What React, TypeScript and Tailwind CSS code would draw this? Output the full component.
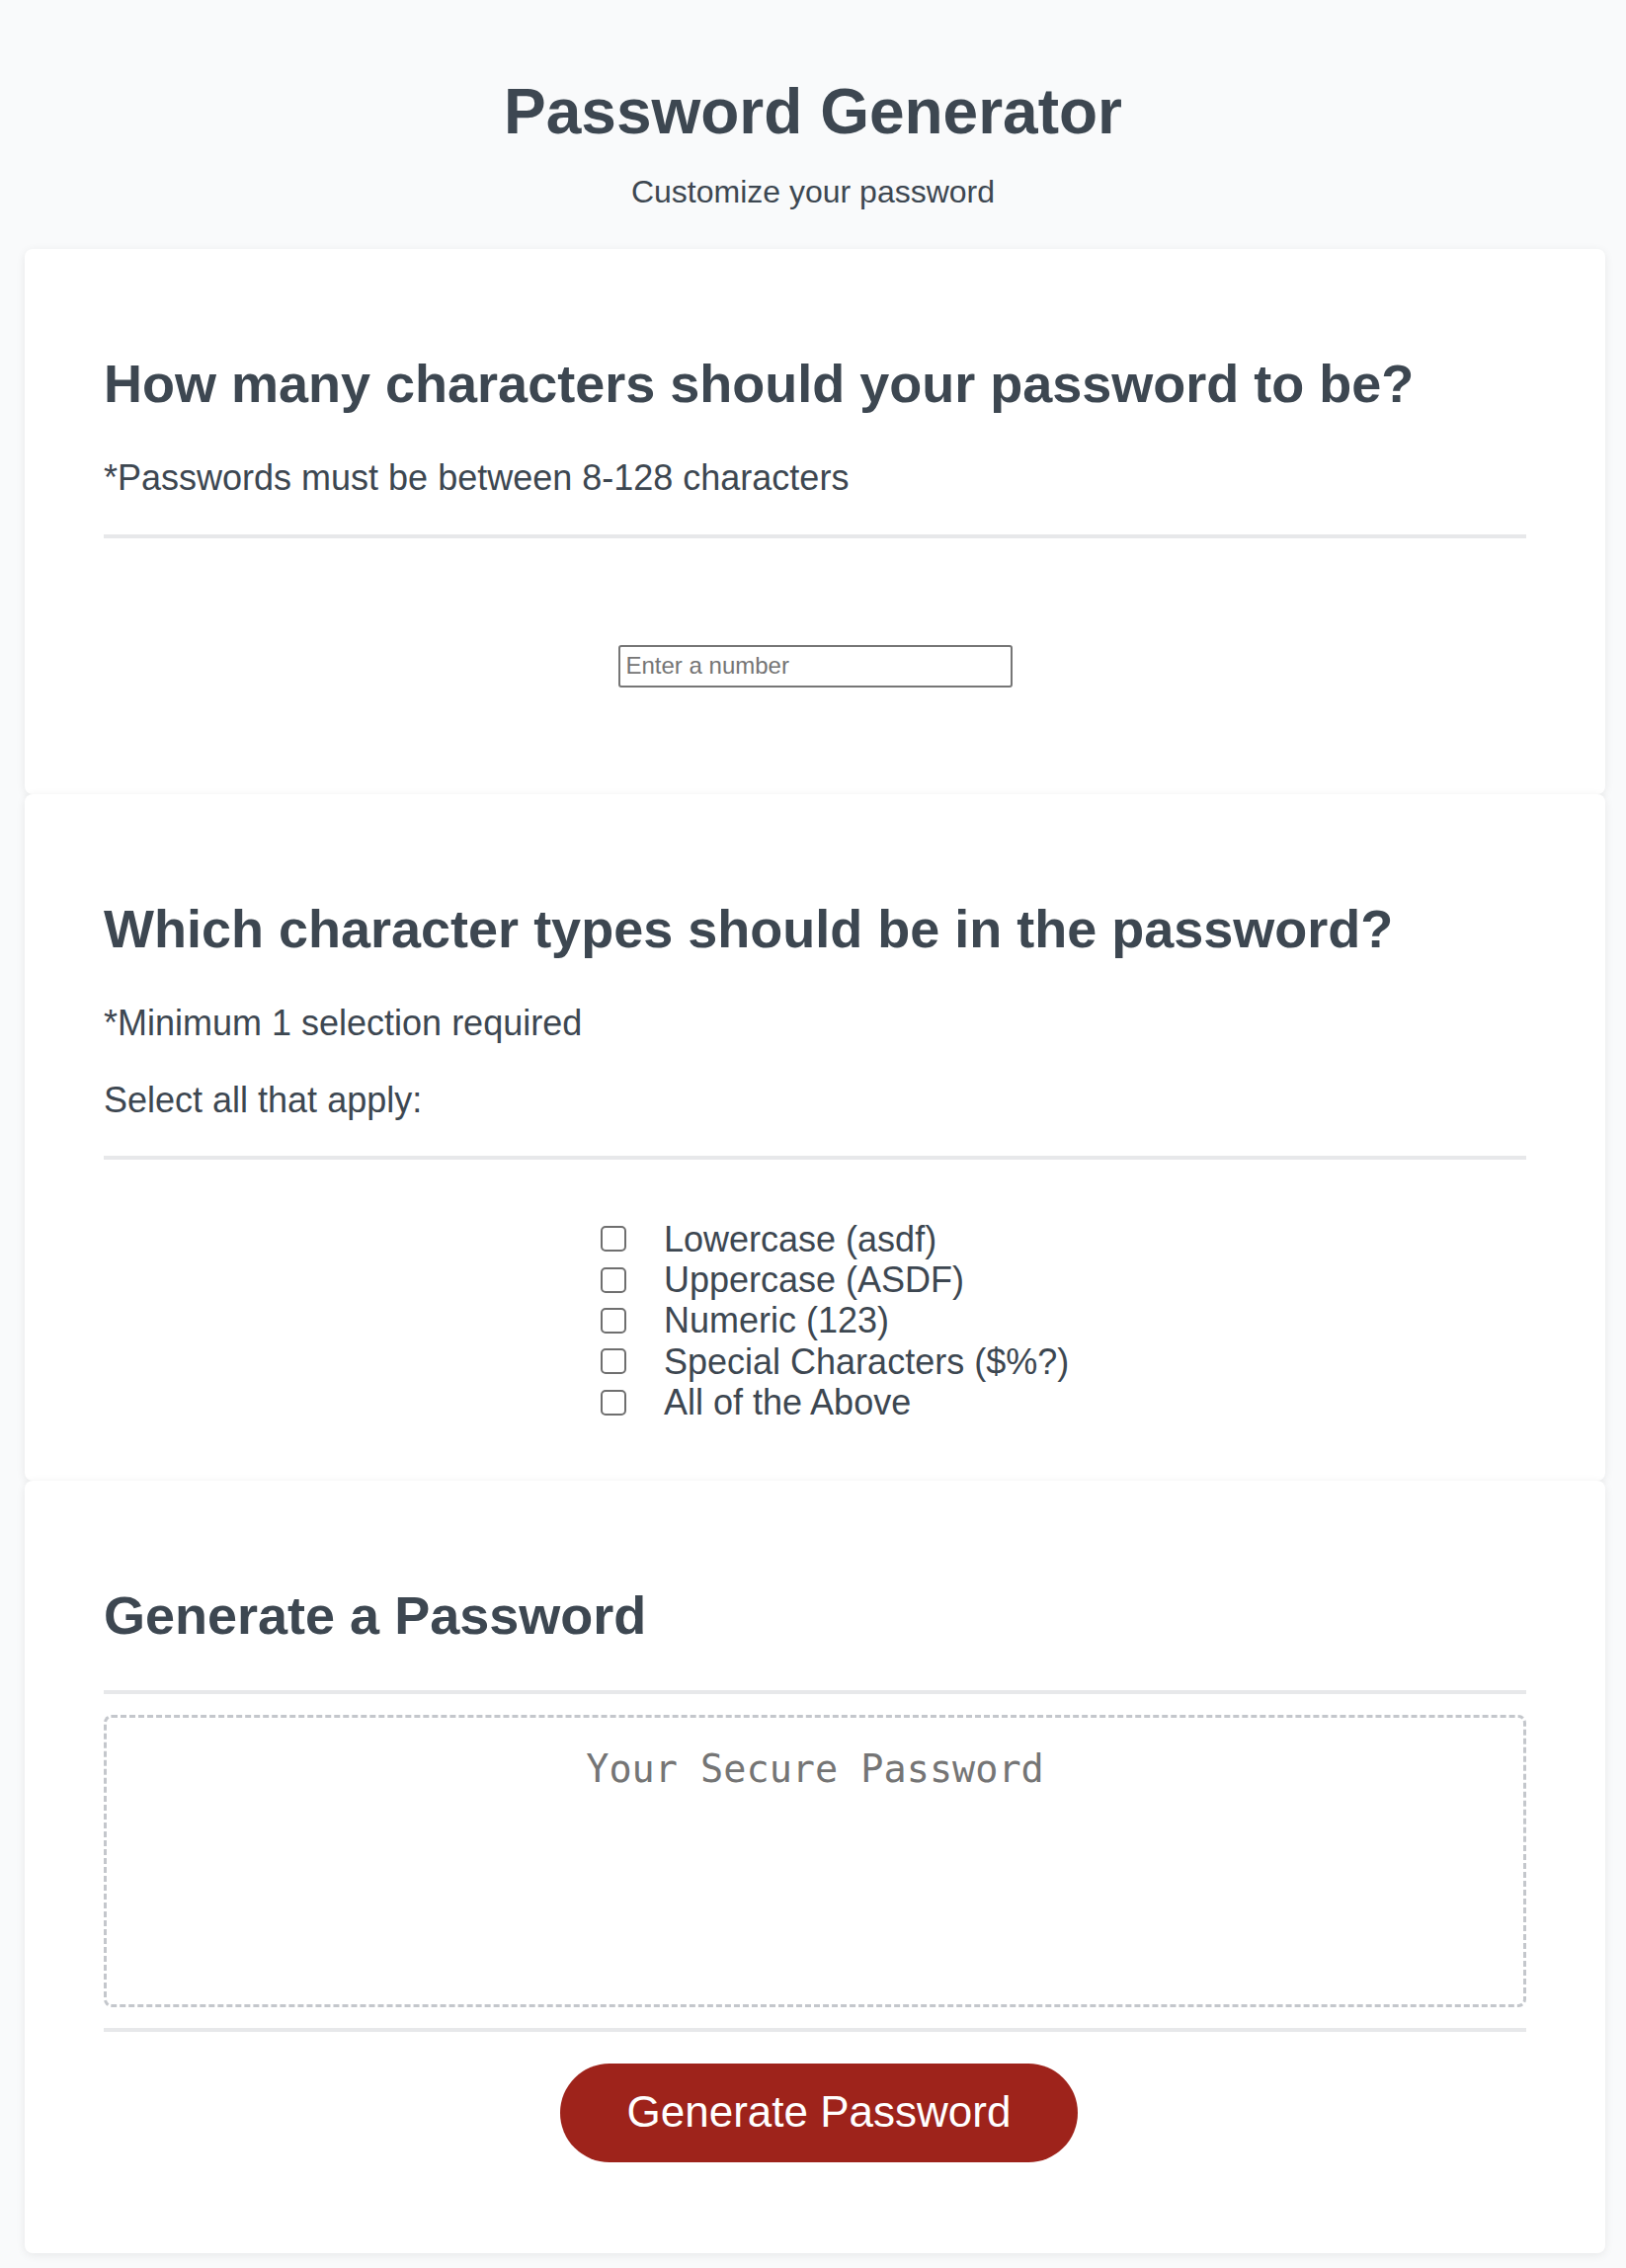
const options = [
  "Lowercase (asdf)",
  "Uppercase (ASDF)",
  "Numeric (123)",
  "Special Characters ($%?)",
  "All of the Above",
];

const Card = ({ children, bottom }: { children: React.ReactNode; bottom: string }) => (
  <section
    className={`bg-white rounded-[8px] shadow-[0_2px_10px_rgba(0,0,0,0.08)] px-[80px] pt-[106px] ${bottom}`}
  >
    {children}
  </section>
);

const Divider = ({ className = "" }: { className?: string }) => (
  <div className={`h-[4px] bg-[#e7e8ea] ${className}`} />
);

const App = () => {
  return (
    <div
      className="min-h-screen bg-[#f9fafb] pt-[77px] pb-[14px] text-[#3d4751]"
      style={{ fontFamily: '"Liberation Sans", Arial, sans-serif' }}
    >
      <header className="text-center">
        <h1 className="text-[64px] font-bold leading-[1.15]">Password Generator</h1>
        <p className="mt-[25px] text-[32px] leading-[1.15]">Customize your password</p>
      </header>

      <main className="mt-[40px] ml-[25px] mr-[21px] flex flex-col">
        <Card bottom="pb-[108px]">
          <h2 className="text-[54px] font-bold leading-[61px]">
            How many characters should your password to be?
          </h2>
          <p className="mt-[44px] text-[36px] leading-[1.15]">
            *Passwords must be between 8-128 characters
          </p>
          <Divider className="mt-[36px]" />
          <div className="mt-[108px] flex justify-center">
            <input
              type="number"
              placeholder="Enter a number"
              className="w-[399px] h-[43px] border-2 border-[#767676] rounded-[3px] px-[6px] text-[24px] text-[#333] placeholder:text-[#757575] outline-none"
            />
          </div>
        </Card>

        <Card bottom="pb-[58px]">
          <h2 className="text-[54px] font-bold leading-[61px]">
            Which character types should be in the password?
          </h2>
          <p className="mt-[44px] text-[36px] leading-[1.15]">*Minimum 1 selection required</p>
          <p className="mt-[37px] text-[36px] leading-[1.15]">Select all that apply:</p>
          <Divider className="mt-[35px]" />
          <div className="mt-[60px] ml-[503px] flex flex-col">
            {options.map((o) => (
              <label key={o} className="flex items-center gap-[38px] text-[36px] leading-[1.15]">
                <input
                  type="checkbox"
                  className="appearance-none w-[26px] h-[26px] border-2 border-[#6f6f6f] rounded-[5px] bg-white"
                />
                <span>{o}</span>
              </label>
            ))}
          </div>
        </Card>

        <Card bottom="pb-[92px]">
          <h2 className="text-[54px] font-bold leading-[61px]">Generate a Password</h2>
          <Divider className="mt-[45px]" />
          <div className="mt-[21px] h-[296px] border-[3px] border-dashed border-[#c4c7cc] rounded-[8px] pt-[30px] text-center">
            <span
              className="text-[38.5px] leading-[1.15] text-[#757575]"
              style={{ fontFamily: '"DejaVu Sans Mono", monospace' }}
            >
              Your Secure Password
            </span>
          </div>
          <Divider className="mt-[21px]" />
          <div className="mt-[32px] flex justify-center pl-[8px]">
            <button className="w-[524px] h-[100px] rounded-full bg-[#9e231b] text-white text-[44px] leading-[1.15]">
              Generate Password
            </button>
          </div>
        </Card>
      </main>
    </div>
  );
};

export default App;
